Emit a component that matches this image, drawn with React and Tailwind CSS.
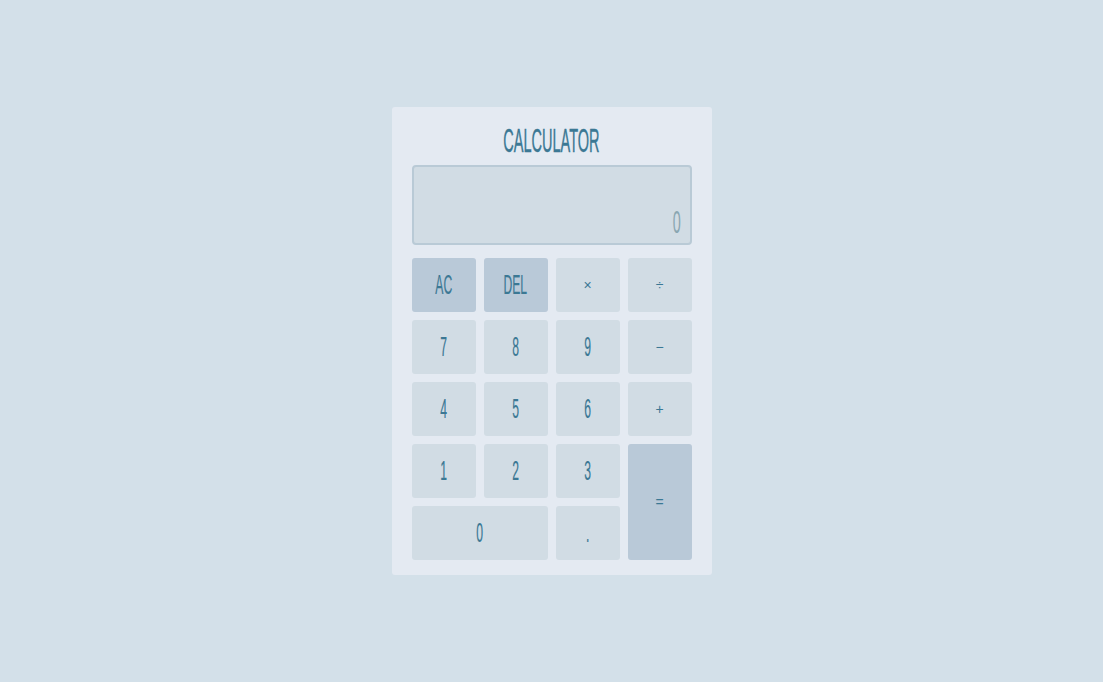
import React from "react";

const font = { fontFamily: '"Liberation Sans", Arial, sans-serif' };

function Btn({ label, kind = "num", special = false, className = "" }) {
  const bg = special ? "bg-[#b9c9d8]" : "bg-[#d1dce4]";
  return (
    <button
      className={`${bg} rounded-[3px] flex items-center justify-center text-[#3b7894] ${className}`}
    >
      {kind === "op" ? (
        <span className="text-[14px] leading-none">{label}</span>
      ) : (
        <span className="inline-block text-[27px] leading-none font-normal scale-x-[0.45] origin-center [-webkit-text-stroke:0.2px_#3b7894]">
          {label}
        </span>
      )}
    </button>
  );
}

export default function App() {
  return (
    <div
      className="w-full min-h-[682px] bg-[#d3e0e9] flex justify-center items-start pt-[107px]"
      style={font}
    >
      <div className="w-[320px] bg-[#e4eaf2] rounded-[3px] px-5 pt-[17px] pb-[15px]">
        <div className="text-center text-[#3b7894] leading-none">
          <span className="inline-block text-[33px] font-normal scale-x-[0.44] origin-center [-webkit-text-stroke:0.4px_#3b7894]">
            CALCULATOR
          </span>
        </div>
        <div className="mt-2 h-[80px] border-2 border-[#b9cad6] bg-[#d1dce4] rounded-[4px] flex items-end justify-end pr-[9px] pb-[5px]">
          <span className="inline-block text-[32px] leading-none font-normal text-[#8aa7b2] scale-x-[0.45] origin-right">
            0
          </span>
        </div>
        <div className="mt-[13px] grid grid-cols-4 gap-2 auto-rows-[54px]">
          <Btn label="AC" special />
          <Btn label="DEL" special />
          <Btn label="×" kind="op" />
          <Btn label="÷" kind="op" />
          <Btn label="7" />
          <Btn label="8" />
          <Btn label="9" />
          <Btn label="−" kind="op" />
          <Btn label="4" />
          <Btn label="5" />
          <Btn label="6" />
          <Btn label="+" kind="op" />
          <Btn label="1" />
          <Btn label="2" />
          <Btn label="3" />
          <Btn label="=" kind="op" special className="row-span-2" />
          <Btn label="0" className="col-span-2" />
          <Btn label="." />
        </div>
      </div>
    </div>
  );
}
